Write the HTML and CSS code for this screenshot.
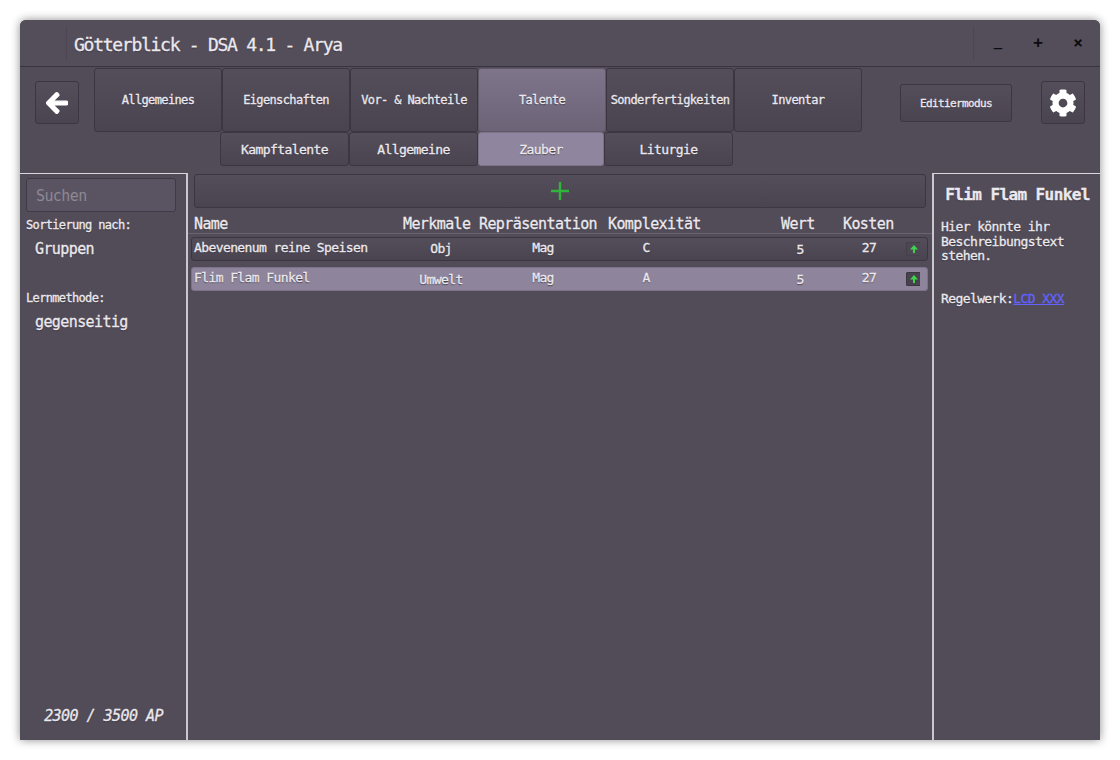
FILE: index.html
```html
<!DOCTYPE html>
<html lang="de">
<head>
    <meta charset="UTF-8">
    <title>Götterblick - DSA 4.1 - Arya</title>
    <link rel="stylesheet" href="styles.css">
</head>
<body>
    <div class="window">
        <header class="titlebar">
            <div class="title">Götterblick - DSA 4.1 - Arya</div>
            <div class="controls">
                <span class="ctl ctl-min">_</span>
                <span class="ctl">+</span>
                <span class="ctl">×</span>
            </div>
        </header>

        <nav class="nav">
            <div class="top-row">
                <button class="btn icon-btn back">
                    <svg width="22" height="24" viewBox="0 0 448 512"><path fill="#fff" stroke="#fff" stroke-width="30" d="M257.5 445.1l-22.2 22.2c-9.4 9.4-24.6 9.4-33.9 0L7 273c-9.4-9.4-9.4-24.6 0-33.9L201.4 44.7c9.4-9.4 24.6-9.4 33.9 0l22.2 22.2c9.5 9.5 9.3 25-.4 34.3L136.6 216H424c13.3 0 24 10.7 24 24v32c0 13.3-10.7 24-24 24H136.6l120.5 114.8c9.8 9.3 10 24.8.4 34.3z"/></svg>
                </button>
                <div class="tabs">
                    <button class="btn tab">Allgemeines</button>
                    <button class="btn tab">Eigenschaften</button>
                    <button class="btn tab">Vor- &amp; Nachteile</button>
                    <button class="btn tab active">Talente</button>
                    <button class="btn tab">Sonderfertigkeiten</button>
                    <button class="btn tab">Inventar</button>
                </div>
                <button class="btn edit">Editiermodus</button>
                <button class="btn icon-btn gear">
                    <svg width="28" height="28" viewBox="0 0 512 512"><path fill="#fff" d="M487.4 315.7l-42.6-24.6c4.3-23.2 4.3-47 0-70.2l42.6-24.6c4.9-2.8 7.1-8.6 5.5-14-11.1-35.6-30-67.8-54.7-94.6-3.8-4.1-10-5.1-14.8-2.3L380.8 110c-17.9-15.4-38.5-27.3-60.8-35.1V25.8c0-5.6-3.9-10.5-9.4-11.7-36.7-8.2-74.3-7.8-109.2 0-5.5 1.2-9.4 6.1-9.4 11.7V75c-22.2 7.9-42.8 19.8-60.8 35.1L88.7 85.5c-4.9-2.8-11-1.9-14.8 2.3-24.7 26.7-43.6 58.9-54.7 94.6-1.7 5.4.6 11.2 5.5 14L67.3 221c-4.3 23.2-4.3 47 0 70.2l-42.6 24.6c-4.9 2.8-7.1 8.6-5.5 14 11.1 35.6 30 67.8 54.7 94.6 3.8 4.1 10 5.1 14.8 2.3l42.6-24.6c17.9 15.4 38.5 27.3 60.8 35.1v49.2c0 5.6 3.9 10.5 9.4 11.7 36.7 8.2 74.3 7.8 109.2 0 5.5-1.2 9.4-6.1 9.4-11.7v-49.2c22.2-7.9 42.8-19.8 60.8-35.1l42.6 24.6c4.9 2.8 11 1.9 14.8-2.3 24.7-26.7 43.6-58.9 54.7-94.6 1.5-5.5-.7-11.3-5.6-14.1zM256 336c-44.1 0-80-35.9-80-80s35.9-80 80-80 80 35.9 80 80-35.9 80-80 80z"/></svg>
                </button>
            </div>
            <div class="sub-tabs">
                <button class="btn sub">Kampftalente</button>
                <button class="btn sub">Allgemeine</button>
                <button class="btn sub active">Zauber</button>
                <button class="btn sub">Liturgie</button>
            </div>
        </nav>

        <main class="content">
            <aside class="side">
                <div class="search">Suchen</div>
                <div class="label">Sortierung nach:</div>
                <div class="value">Gruppen</div>
                <div class="label second">Lernmethode:</div>
                <div class="value">gegenseitig</div>
                <div class="ap">2300 / 3500 AP</div>
            </aside>

            <section class="list">
                <button class="btn add">
                    <svg width="20" height="20" viewBox="0 0 20 20"><path d="M10 1v18M1 10h18" stroke="#2fb53a" stroke-width="2.4" fill="none"/></svg>
                </button>
                <div class="list-head">
                    <span class="h-name">Name</span>
                    <span class="h-merk">Merkmale</span>
                    <span class="h-rep">Repräsentation</span>
                    <span class="h-komp">Komplexität</span>
                    <span class="h-wert">Wert</span>
                    <span class="h-kost">Kosten</span>
                </div>
                <div class="row">
                    <span class="c-name">Abevenenum reine Speisen</span>
                    <span class="c-merk">Obj</span>
                    <span class="c-rep">Mag</span>
                    <span class="c-komp">C</span>
                    <span class="c-wert">5</span>
                    <span class="c-kost">27</span>
                    <span class="up">
                        <svg width="8" height="8" viewBox="0 0 8 8"><path fill="#3fd24c" d="M4 0 8 4.6H5V8H3V4.6H0Z"/></svg>
                    </span>
                </div>
                <div class="row selected">
                    <span class="c-name">Flim Flam Funkel</span>
                    <span class="c-merk">Umwelt</span>
                    <span class="c-rep">Mag</span>
                    <span class="c-komp">A</span>
                    <span class="c-wert">5</span>
                    <span class="c-kost">27</span>
                    <span class="up">
                        <svg width="8" height="8" viewBox="0 0 8 8"><path fill="#3fd24c" d="M4 0 8 4.6H5V8H3V4.6H0Z"/></svg>
                    </span>
                </div>
            </section>

            <aside class="info">
                <h2>Flim Flam Funkel</h2>
                <p>Hier könnte ihr<br>Beschreibungstext<br>stehen.</p>
                <div class="rule">Regelwerk:<a href="#">LCD XXX</a></div>
            </aside>
        </main>
    </div>
</body>
</html>
```

FILE: styles.css
```css
* {
    box-sizing: border-box;
}
body {
    margin: 0;
    padding: 20px;
    height: 760px;
    overflow: hidden;
    background: #fff;
    font-family: "DejaVu Sans Mono", "Liberation Mono", monospace;
    color: #ece9ee;
    text-shadow: 0 1px 1px #38333d;
    -webkit-text-stroke: 0.3px;
}
.window {
    width: 1080px;
    height: 720px;
    display: flex;
    flex-direction: column;
    background: #524c58;
    border-radius: 6px 6px 0 0;
    box-shadow: 0 0 10px rgba(0, 0, 0, 0.45);
    overflow: hidden;
}
.titlebar {
    height: 47px;
    flex: none;
    display: flex;
    align-items: center;
    justify-content: space-between;
    background: #544e5b;
    border-bottom: 1px solid #39343e;
}
.title {
    margin-left: 46px;
    padding: 8px 0 4px 7px;
    height: 34px;
    border-left: 1px solid #4b4651;
    font-size: 18px;
    letter-spacing: -1.27px;
    line-height: 22px;
    white-space: nowrap;
}
.controls {
    display: flex;
    height: 34px;
    width: 127px;
    border-left: 1px solid #4b4651;
    padding-left: 4px;
}
.ctl {
    width: 40px;
    text-align: center;
    font-size: 16px;
    line-height: 34px;
    font-weight: bold;
    color: #0c0b0d;
    text-shadow: none;
    -webkit-text-stroke: 0;
}
.ctl-min {
    line-height: 30px;
    font-size: 14px;
}
.btn {
    display: block;
    margin: 0;
    padding: 0;
    font-family: inherit;
    color: #ece9ee;
    background: linear-gradient(#544e5b, #4a4450);
    border: 1px solid #3b3641;
    border-radius: 3px;
    text-shadow: 0 1px 1px #38333d;
}
.nav {
    height: 106px;
    flex: none;
}
.top-row {
    height: 65px;
    display: flex;
    align-items: flex-start;
}
.icon-btn {
    width: 44px;
    height: 43px;
    display: flex;
    align-items: center;
    justify-content: center;
}
.back {
    margin-left: 15px;
    margin-top: 14px;
}
.tabs {
    display: flex;
    margin-left: 15px;
    margin-top: 1px;
}
.tab {
    width: 128px;
    height: 64px;
    font-size: 12px;
    letter-spacing: -0.63px;
    white-space: nowrap;
}
.tab.active {
    background: linear-gradient(#7f758b, #6c6377);
    border-color: #5f5869;
}
.edit {
    margin-left: 38px;
    margin-top: 17px;
    width: 112px;
    height: 38px;
    font-size: 11px;
    letter-spacing: -0.62px;
}
.gear {
    margin-left: 29px;
    margin-top: 14px;
}
.sub-tabs {
    display: flex;
    margin-left: 200px;
}
.sub {
    width: 129px;
    height: 34px;
    font-size: 13px;
    letter-spacing: -0.58px;
}
.sub:nth-child(3) {
    width: 126px;
}
.sub.active {
    background: #8f859f;
    border-color: #7c7389;
}
.content {
    flex: 1;
    display: flex;
    min-height: 0;
}
.side {
    width: 168px;
    flex: none;
    display: flex;
    flex-direction: column;
    padding: 4px 10px 0 6px;
    border-top: 1px solid #d9d6dc;
    border-right: 2px solid #c9c6cd;
}
.search {
    height: 34px;
    background: #5a5462;
    border: 1px solid #3f3a45;
    border-radius: 3px;
    padding-left: 9px;
    font-size: 15px;
    letter-spacing: -0.6px;
    line-height: 35px;
    color: #8d8893;
    text-shadow: none;
    -webkit-text-stroke: 0;
}
.label {
    margin-top: 6px;
    font-size: 12px;
    letter-spacing: -0.66px;
    line-height: 14px;
}
.label.second {
    margin-top: 32px;
}
.value {
    margin-top: 7px;
    padding-left: 9px;
    font-size: 15px;
    letter-spacing: -0.6px;
    line-height: 20px;
}
.ap {
    margin-top: auto;
    margin-bottom: 14px;
    padding-left: 5px;
    text-align: center;
    font-size: 15px;
    font-style: italic;
    letter-spacing: -0.55px;
    line-height: 20px;
}
.list {
    flex: 1;
    min-width: 0;
    padding: 1px 4px 0;
}
.add {
    width: 732px;
    height: 34px;
    margin-left: 2px;
    display: flex;
    align-items: center;
    justify-content: center;
}
.list-head {
    height: 26px;
    margin: 0 -4px 3px;
    border-bottom: 1px solid #6a6470;
    font-size: 15px;
    letter-spacing: -0.6px;
    line-height: 32px;
    display: flex;
}
.list-head span {
    display: block;
    white-space: nowrap;
}
.h-name { width: 215px; padding-left: 6px; }
.h-merk { width: 76px; }
.h-rep { width: 129px; }
.h-komp { width: 173px; }
.h-wert { width: 62px; }
.row {
    height: 24px;
    margin: 0 -1px 6px -1px;
    width: 737px;
    display: flex;
    align-items: center;
    background: linear-gradient(#544e5b, #4a4450);
    border: 1px solid #3b3641;
    border-radius: 3px;
    font-size: 13px;
    letter-spacing: -0.6px;
}
.row.selected {
    background: #8e849c;
    border-color: #7c7389;
}
.row span {
    display: block;
    text-align: center;
    white-space: nowrap;
}
.row .c-name { width: 208px; padding-left: 2px; text-align: left; margin-top: -4px; }
.c-merk { width: 82px; margin-top: -2px; }
.c-rep { width: 122px; margin-top: -3px; }
.c-komp { width: 84px; margin-top: -4px; }
.c-wert { width: 60px; margin-left: 82px; margin-top: 1px; }
.c-kost { width: 60px; margin-left: 9px; margin-top: -4px; }
.selected .c-merk { margin-top: 1px; }
.row .up {
    width: 14px;
    height: 14px;
    margin-left: 7px;
    display: flex;
    align-items: center;
    justify-content: center;
    background: #4d4753;
    border-radius: 2px 0 0 2px;
    border: 1px solid #443f49;
    border-right: none;
}
.selected .up {
    background: #47424d;
    border-color: #3a3540;
}
.info {
    width: 168px;
    flex: none;
    padding: 11px 6px 0 7px;
    border-top: 1px solid #d9d6dc;
    border-left: 2px solid #c9c6cd;
}
.info h2 {
    margin: 0;
    text-align: center;
    font-size: 16px;
    letter-spacing: -0.6px;
    line-height: 20px;
}
.info p {
    margin: 15px 0 0;
    font-size: 13px;
    letter-spacing: -0.6px;
    line-height: 14.5px;
}
.rule {
    margin-top: 27px;
    font-size: 13px;
    letter-spacing: -0.6px;
    line-height: 16px;
}
.rule a {
    color: #6262ff;
    text-shadow: none;
}
```
